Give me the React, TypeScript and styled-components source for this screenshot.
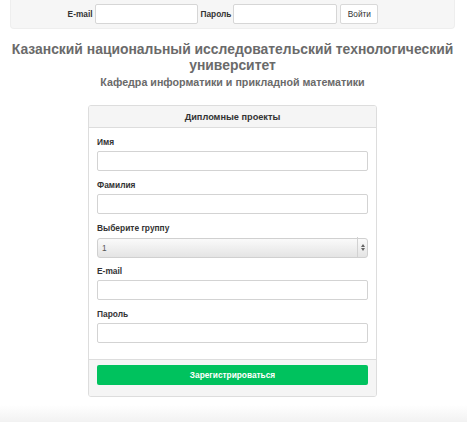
import React from "react";
import styled, { createGlobalStyle } from "styled-components";

const Global = createGlobalStyle`
  html, body { margin: 0; padding: 0; background: #fff; }
  body { font-family: "Liberation Sans", Arial, Helvetica, sans-serif; color: #333; }
  * { box-sizing: border-box; }
`;

const Page = styled.div`
  width: 465px;
  display: flex;
  flex-direction: column;
  align-items: center;
`;

const TopBar = styled.div`
  align-self: stretch;
  margin: 0 10px;
  height: 29px;
  background: #f6f6f6;
  border: 1px solid #eeeeee;
  border-top: none;
  border-radius: 0 0 4px 4px;
  display: flex;
  align-items: center;
  justify-content: center;
  padding-right: 19px;
`;

const BarLabel = styled.span`
  font-size: 8.3px;
  font-weight: bold;
  color: #333;
  margin-right: 2px;
`;

const BarInput = styled.input<{ $w: number }>`
  width: ${(p) => p.$w}px;
  height: 20px;
  margin-right: 3px;
  border: 1px solid #d6d6d6;
  border-radius: 2px;
  background: #fff;
  outline: none;
  padding: 0 4px;
`;

const BarButton = styled.button`
  width: 38px;
  height: 20px;
  border: 1px solid #d9d9d9;
  border-radius: 2px;
  background: #fff;
  font-family: inherit;
  font-size: 8.3px;
  color: #333;
  padding: 0;
`;

const Title = styled.h1`
  margin: 12px 0 0;
  width: 460px;
  text-align: center;
  font-size: 13.9px;
  line-height: 16px;
  font-weight: bold;
  color: #6a6a6a;
`;

const Subtitle = styled.h2`
  margin: 2px 0 0;
  text-align: center;
  font-size: 10.7px;
  line-height: 14px;
  font-weight: bold;
  color: #6a6a6a;
`;

const Panel = styled.div`
  margin-top: 16px;
  width: 289px;
  border: 1px solid #dddddd;
  border-radius: 3px;
  background: #fff;
  overflow: hidden;
`;

const PanelHeader = styled.div`
  height: 22px;
  background: #f5f5f5;
  border-bottom: 1px solid #dddddd;
  display: flex;
  align-items: center;
  justify-content: center;
  font-size: 9.2px;
  font-weight: bold;
  color: #333;
`;

const PanelBody = styled.div`
  padding: 9px 8px 7px;
`;

const Group = styled.div`
  margin-bottom: 9px;
  display: flex;
  flex-direction: column;
`;

const Label = styled.label`
  font-size: 8.4px;
  line-height: 11px;
  font-weight: bold;
  color: #333;
  margin-bottom: 3px;
`;

const Input = styled.input`
  width: 100%;
  height: 20px;
  border: 1px solid #d3d3d3;
  border-radius: 2px;
  background: #fff;
  outline: none;
  padding: 0 4px;
`;

const SelectWrap = styled.div`
  position: relative;
  height: 20px;
`;

const Select = styled.select`
  appearance: none;
  -webkit-appearance: none;
  width: 100%;
  height: 20px;
  border: 1px solid #d0d0d0;
  border-radius: 3px;
  background: linear-gradient(#fafafa, #e4e4e4);
  font-family: inherit;
  font-size: 8.3px;
  color: #555;
  padding: 0 4px;
  outline: none;
`;

const Arrows = styled.div`
  position: absolute;
  right: 0;
  top: 0;
  bottom: 0;
  width: 11px;
  border-left: 1px solid #d2d2d2;
  display: flex;
  flex-direction: column;
  align-items: center;
  justify-content: center;
  pointer-events: none;
  gap: 1px;
`;

const Tri = styled.div<{ $up?: boolean }>`
  width: 0;
  height: 0;
  border-left: 2px solid transparent;
  border-right: 2px solid transparent;
  ${(p) => (p.$up ? "border-bottom: 3px solid #666;" : "border-top: 3px solid #666;")}
`;

const PanelFooter = styled.div`
  background: #f5f5f5;
  border-top: 1px solid #dddddd;
  padding: 4px 8px 11px;
`;

const SubmitButton = styled.button`
  width: 100%;
  height: 20px;
  border: none;
  border-radius: 2px;
  background: #00c25e;
  color: #fff;
  font-family: inherit;
  font-size: 8.3px;
  font-weight: bold;
  padding: 0;
`;

const Footer = styled.div`
  margin-top: 8px;
  width: 469px;
  height: 22px;
  background: linear-gradient(#ffffff, #eeeeee);
`;

const fields = [
  { label: "Имя", type: "text" },
  { label: "Фамилия", type: "text" },
];

export default function App() {
  return (
    <>
      <Global />
      <Page>
        <TopBar>
          <BarLabel>E-mail</BarLabel>
          <BarInput $w={103} type="text" />
          <BarLabel>Пароль</BarLabel>
          <BarInput $w={104} type="password" />
          <BarButton>Войти</BarButton>
        </TopBar>
        <Title>Казанский национальный исследовательский технологический университет</Title>
        <Subtitle>Кафедра информатики и прикладной математики</Subtitle>
        <Panel>
          <PanelHeader>Дипломные проекты</PanelHeader>
          <PanelBody>
            {fields.map((f) => (
              <Group key={f.label}>
                <Label>{f.label}</Label>
                <Input type={f.type} />
              </Group>
            ))}
            <Group>
              <Label>Выберите группу</Label>
              <SelectWrap>
                <Select defaultValue="1">
                  <option value="1">1</option>
                  <option value="2">2</option>
                </Select>
                <Arrows>
                  <Tri $up />
                  <Tri />
                </Arrows>
              </SelectWrap>
            </Group>
            <Group>
              <Label>E-mail</Label>
              <Input type="email" />
            </Group>
            <Group>
              <Label>Пароль</Label>
              <Input type="password" />
            </Group>
          </PanelBody>
          <PanelFooter>
            <SubmitButton>Зарегистрироваться</SubmitButton>
          </PanelFooter>
        </Panel>
        <Footer />
      </Page>
    </>
  );
}
